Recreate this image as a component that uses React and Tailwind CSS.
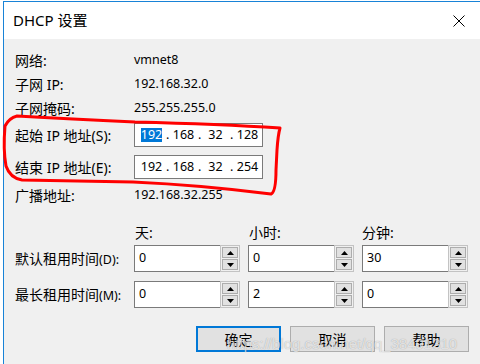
import React from 'react'

const IpBox = ({ parts, selectFirst }) => (
  <div className="flex h-[24px] w-[129px] items-center border border-[#7a7a7a] bg-white pl-[2px] font-['Noto_Sans',sans-serif] text-[12.5px] text-black">
    {parts.map((p, i) => (
      <React.Fragment key={i}>
        {i > 0 && <span className="w-[3px] text-center">.</span>}
        <span className="w-[29px] text-center">
          {i === 0 && selectFirst ? (
            <span className="inline-block h-[14px] bg-[#0078d7] leading-[14px] text-white">{p}</span>
          ) : (
            p
          )}
        </span>
      </React.Fragment>
    ))}
  </div>
)

const Arrow = ({ up }) => (
  <svg width="7" height="4" viewBox="0 0 7 4">
    {up ? <polygon points="0,4 7,4 3.5,0" fill="#000" /> : <polygon points="0,0 7,0 3.5,4" fill="#000" />}
  </svg>
)

const Spin = ({ value }) => (
  <div className="flex h-[27px] w-[106px]">
    <div className="flex flex-1 items-center border border-r-0 border-[#7a7a7a] bg-white pl-[4px] font-['Noto_Sans',sans-serif] text-[12.5px] text-black">
      {value}
    </div>
    <div className="flex w-[20px] flex-col gap-[1px] border border-[#c3c3c3] bg-[#f0f0f0] p-[1px]">
      <div className="flex flex-1 items-center justify-center border border-[#adadad] bg-[#e1e1e1]">
        <Arrow up />
      </div>
      <div className="flex flex-1 items-center justify-center border border-[#adadad] bg-[#e1e1e1]">
        <Arrow />
      </div>
    </div>
  </div>
)

const Row = ({ label, value }) => (
  <div className="grid h-[24px] grid-cols-[119px_1fr] items-center">
    <span>{label}</span>
    <span className="font-['Noto_Sans',sans-serif] text-[12.5px]">{value}</span>
  </div>
)

export default function App() {
  return (
    <div className="relative h-[364px] w-[480px] overflow-hidden bg-white pt-[1px] font-['Noto_Sans','Noto_Sans_CJK_SC',sans-serif] text-[14px] text-black">
      <div className="ml-[3px] h-[363px] border-l border-t border-[#1883d7]">
        {/* TITLE BAR */}
        <div className="flex h-[37px] items-center justify-between bg-white pl-[9px] pr-[12px]">
          <span className="text-[15px] leading-none">DHCP 设置</span>
          <svg width="12" height="12" viewBox="0 0 12 12" className="mr-[3px]">
            <path d="M0.5 0.5 L11.5 11.5 M11.5 0.5 L0.5 11.5" stroke="#000" strokeWidth="1" />
          </svg>
        </div>

        {/* BODY */}
        <div className="h-[325px] bg-[#f0f0f0] pl-[11px] pt-[9px]">
          <Row label="网络:" value="vmnet8" />
          <Row label="子网 IP:" value="192.168.32.0" />
          <Row label="子网掩码:" value="255.255.255.0" />

          <div className="mt-[3px] grid h-[24px] grid-cols-[119px_1fr] items-center">
            <span>起始 IP 地址(S):</span>
            <IpBox parts={['192', '168', '32', '128']} selectFirst />
          </div>
          <div className="mt-[8px] grid h-[24px] grid-cols-[119px_1fr] items-center">
            <span>结束 IP 地址(E):</span>
            <IpBox parts={['192', '168', '32', '254']} />
          </div>
          <div className="mt-[4px]">
            <Row label="广播地址:" value="192.168.32.255" />
          </div>

          {/* LEASE TIMES */}
          <div className="mt-[13px] grid h-[24px] grid-cols-[111px_106px_106px_106px] items-center gap-x-[8px]">
            <span />
            <span className="pl-[1px]">天:</span>
            <span className="pl-[1px]">小时:</span>
            <span>分钟:</span>
          </div>
          <div className="mt-[1px] grid grid-cols-[111px_106px_106px_106px] items-center gap-x-[8px]">
            <span className="whitespace-nowrap">默认租用时间<span className="text-[12.5px]">(D):</span></span>
            <Spin value="0" />
            <Spin value="0" />
            <Spin value="30" />
          </div>
          <div className="mt-[9px] grid grid-cols-[111px_106px_106px_106px] items-center gap-x-[8px]">
            <span className="whitespace-nowrap">最长租用时间<span className="text-[12.5px]">(M):</span></span>
            <Spin value="0" />
            <Spin value="2" />
            <Spin value="0" />
          </div>

          {/* BUTTONS */}
          <div className="mt-[18px] flex gap-[9px] pl-[181px]">
            <button className="h-[26px] w-[85px] border-2 border-[#0078d7] bg-[#e1e1e1]">确定</button>
            <button className="h-[26px] w-[85px] border border-[#adadad] bg-[#e1e1e1]">取消</button>
            <button className="h-[26px] w-[85px] border border-[#adadad] bg-[#e1e1e1]">帮助</button>
          </div>
        </div>
      </div>

      {/* RED ANNOTATION */}
      <svg className="pointer-events-none absolute left-0 top-0" width="480" height="364" viewBox="0 0 480 364">
        <path
          d="M17 116 Q9 118 5 126 Q3 150 6 166 Q10 178 22 180 L133 182 Q200 185 271 194 Q276 192 276 170 L277 150 Q278 135 280 128 Q220 124 135 122 Q70 119 17 116 Z"
          fill="none"
          stroke="#f00"
          strokeWidth="3"
          strokeLinejoin="round"
        />
      </svg>

      {/* WATERMARK */}
      <div className="pointer-events-none absolute left-[227px] top-[333px] font-['Liberation_Sans',sans-serif] text-[15px] text-white/70 [text-shadow:0_0_1px_rgba(0,0,0,0.35)]">
        https://blog.csdn.net/qq_38491310
      </div>
    </div>
  )
}
